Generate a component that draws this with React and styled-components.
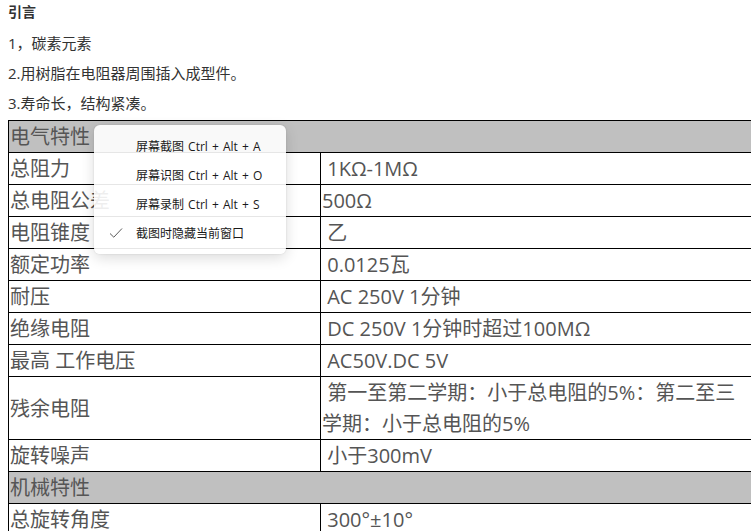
import styled, { createGlobalStyle } from "styled-components";

const GlobalStyle = createGlobalStyle`
  html, body {
    margin: 0;
    padding: 0;
    background: #fff;
    overflow: hidden;
  }
  body {
    font-family: "Open Sans", "Noto Sans CJK SC", "Liberation Sans", sans-serif;
    color: #333;
  }
`;

const electrical = [
  ["总阻力", " 1KΩ-1MΩ"],
  ["总电阻公差", "500Ω"],
  ["电阻锥度", " 乙"],
  ["额定功率", " 0.0125瓦"],
  ["耐压", " AC 250V 1分钟"],
  ["绝缘电阻", " DC 250V 1分钟时超过100MΩ"],
  ["最高 工作电压", " AC50V.DC 5V"],
  ["残余电阻", " 第一至第二学期：小于总电阻的5%：第二至三学期：小于总电阻的5%"],
  ["旋转噪声", " 小于300mV"],
];

const mechanical = [["总旋转角度", " 300°±10°"]];

const menuItems = [
  { label: "屏幕截图 Ctrl + Alt + A" },
  { label: "屏幕识图 Ctrl + Alt + O" },
  { label: "屏幕录制 Ctrl + Alt + S" },
  { label: "截图时隐藏当前窗口", checked: true },
];

export default function App() {
  return (
    <Page>
      <GlobalStyle />
      <Heading>引言</Heading>
      <Intro>
        <Para>1，碳素元素</Para>
        <Para>2.用树脂在电阻器周围插入成型件。</Para>
        <Para>3.寿命长，结构紧凑。</Para>
      </Intro>

      <SpecTable>
        <colgroup>
          <col style={{ width: 312 }} />
          <col />
        </colgroup>
        <tbody>
          <tr>
            <Cell colSpan={2} $group>电气特性</Cell>
          </tr>
          {electrical.map(([k, v]) => (
            <tr key={k}>
              <Cell>{k}</Cell>
              <Cell>{v}</Cell>
            </tr>
          ))}
          <tr>
            <Cell colSpan={2} $group>机械特性</Cell>
          </tr>
          {mechanical.map(([k, v]) => (
            <tr key={k}>
              <Cell>{k}</Cell>
              <Cell>{v}</Cell>
            </tr>
          ))}
        </tbody>
      </SpecTable>

      <Menu>
        {menuItems.map((item) => (
          <MenuItem key={item.label}>
            <CheckSlot>
              {item.checked && (
                <svg width="14" height="12" viewBox="0 0 14 12">
                  <polyline
                    points="1,6.5 4.8,10.2 13,1.5"
                    fill="none"
                    stroke="#5a5a5a"
                    strokeWidth="1"
                  />
                </svg>
              )}
            </CheckSlot>
            {item.label}
          </MenuItem>
        ))}
      </Menu>
    </Page>
  );
}

const Page = styled.div`
  position: relative;
  padding: 0 8px;
  width: 800px;
`;

const Heading = styled.h3`
  margin: 0;
  font-size: 14px;
  font-weight: 700;
  line-height: 24px;
  color: #333;
`;

const Intro = styled.div`
  margin-top: 4px;
`;

const Para = styled.p`
  margin: 0;
  font-size: 15px;
  line-height: 30px;
  color: #333;
`;

const SpecTable = styled.table`
  margin-top: 2px;
  width: 745px;
  border-collapse: collapse;
  border: 1px solid #000;
  table-layout: fixed;
`;

const Cell = styled.td`
  border: 1px solid #000;
  padding: 0 1px;
  height: 31px;
  font-size: 20px;
  line-height: 31px;
  color: #555;
  white-space: pre-wrap;
  vertical-align: middle;
  background: ${({ $group }) => ($group ? "#c0c0c0" : "transparent")};
`;

const Menu = styled.div`
  position: absolute;
  left: 94px;
  top: 125px;
  width: 192px;
  padding: 6px 0 7px;
  box-sizing: border-box;
  background: rgba(255, 255, 255, 0.9);
  border-radius: 6px;
  box-shadow: 0 4px 14px rgba(0, 0, 0, 0.14), 0 0 2px rgba(0, 0, 0, 0.12);
`;

const MenuItem = styled.div`
  display: flex;
  align-items: center;
  height: 29px;
  font-size: 12px;
  word-spacing: 1px;
  color: #1a1a1a;
  white-space: pre;
`;

const CheckSlot = styled.span`
  display: flex;
  align-items: center;
  justify-content: center;
  width: 42px;
  padding-left: 2px;
  box-sizing: border-box;
`;
